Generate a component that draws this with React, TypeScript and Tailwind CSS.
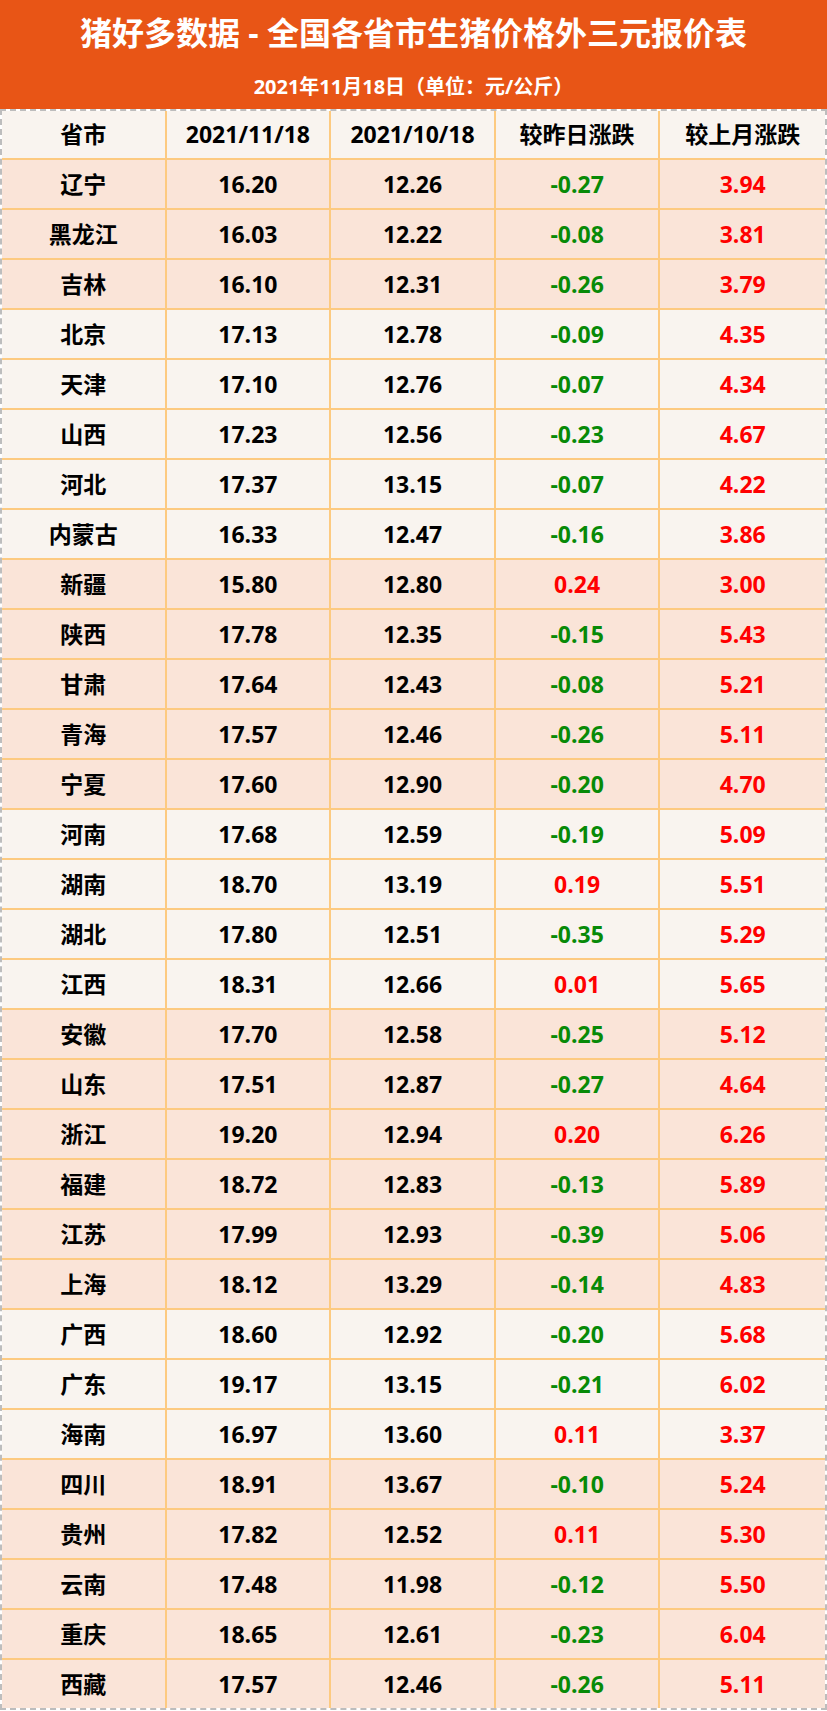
const rows: [string, string, string, string, string][] = [
  ["辽宁", "16.20", "12.26", "-0.27", "3.94"],
  ["黑龙江", "16.03", "12.22", "-0.08", "3.81"],
  ["吉林", "16.10", "12.31", "-0.26", "3.79"],
  ["北京", "17.13", "12.78", "-0.09", "4.35"],
  ["天津", "17.10", "12.76", "-0.07", "4.34"],
  ["山西", "17.23", "12.56", "-0.23", "4.67"],
  ["河北", "17.37", "13.15", "-0.07", "4.22"],
  ["内蒙古", "16.33", "12.47", "-0.16", "3.86"],
  ["新疆", "15.80", "12.80", "0.24", "3.00"],
  ["陕西", "17.78", "12.35", "-0.15", "5.43"],
  ["甘肃", "17.64", "12.43", "-0.08", "5.21"],
  ["青海", "17.57", "12.46", "-0.26", "5.11"],
  ["宁夏", "17.60", "12.90", "-0.20", "4.70"],
  ["河南", "17.68", "12.59", "-0.19", "5.09"],
  ["湖南", "18.70", "13.19", "0.19", "5.51"],
  ["湖北", "17.80", "12.51", "-0.35", "5.29"],
  ["江西", "18.31", "12.66", "0.01", "5.65"],
  ["安徽", "17.70", "12.58", "-0.25", "5.12"],
  ["山东", "17.51", "12.87", "-0.27", "4.64"],
  ["浙江", "19.20", "12.94", "0.20", "6.26"],
  ["福建", "18.72", "12.83", "-0.13", "5.89"],
  ["江苏", "17.99", "12.93", "-0.39", "5.06"],
  ["上海", "18.12", "13.29", "-0.14", "4.83"],
  ["广西", "18.60", "12.92", "-0.20", "5.68"],
  ["广东", "19.17", "13.15", "-0.21", "6.02"],
  ["海南", "16.97", "13.60", "0.11", "3.37"],
  ["四川", "18.91", "13.67", "-0.10", "5.24"],
  ["贵州", "17.82", "12.52", "0.11", "5.30"],
  ["云南", "17.48", "11.98", "-0.12", "5.50"],
  ["重庆", "18.65", "12.61", "-0.23", "6.04"],
  ["西藏", "17.57", "12.46", "-0.26", "5.11"],
];

// region groups alternate peach / light
const groupSizes = [3, 5, 5, 4, 6, 3, 5];
const peachRows = new Set<number>();
{
  let i = 0;
  groupSizes.forEach((n, g) => {
    for (let k = 0; k < n; k++) {
      if (g % 2 === 0) peachRows.add(i);
      i++;
    }
  });
}

const font = { fontFamily: '"Open Sans", "Noto Sans CJK SC", sans-serif' };

function Cell({ children, last, className = "" }: { children: React.ReactNode; last?: boolean; className?: string }) {
  return (
    <div
      className={`flex items-center justify-center font-bold text-[23px] ${last ? "" : "border-r-2 border-[#fdca80]"} ${className}`}
    >
      {children}
    </div>
  );
}

export default function App() {
  return (
    <div className="w-[827px] h-[1711px] bg-white" style={font}>
      <div className="h-[109px] bg-[#e85516] text-white flex flex-col items-center">
        <div className="mt-[13px] text-[32px] font-bold leading-[40px]">猪好多数据 - 全国各省市生猪价格外三元报价表</div>
        <div className="mt-[21px] text-[20px] font-bold leading-[26px]">2021年11月18日（单位：元/公斤）</div>
      </div>
      <div className="border-2 border-dashed border-[#bdbdbd]">
        <div className="grid grid-cols-5 h-[49px] bg-[#f9f4ef] border-b-2 border-[#fdca80] text-black">
          <Cell>省市</Cell>
          <Cell>2021/11/18</Cell>
          <Cell>2021/10/18</Cell>
          <Cell>较昨日涨跌</Cell>
          <Cell last>较上月涨跌</Cell>
        </div>
        {rows.map((r, i) => {
          const isLast = i === rows.length - 1;
          const day = r[3].startsWith("-");
          return (
            <div
              key={r[0]}
              className={`grid grid-cols-5 ${isLast ? "h-[48px]" : "h-[50px] border-b-2 border-[#fdca80]"} ${peachRows.has(i) ? "bg-[#fae4d8]" : "bg-[#f9f4ef]"} text-black`}
            >
              <Cell>{r[0]}</Cell>
              <Cell>{r[1]}</Cell>
              <Cell>{r[2]}</Cell>
              <Cell className={day ? "text-[#078a07]" : "text-[#ff0000]"}>{r[3]}</Cell>
              <Cell last className="text-[#ff0000]">{r[4]}</Cell>
            </div>
          );
        })}
      </div>
    </div>
  );
}
